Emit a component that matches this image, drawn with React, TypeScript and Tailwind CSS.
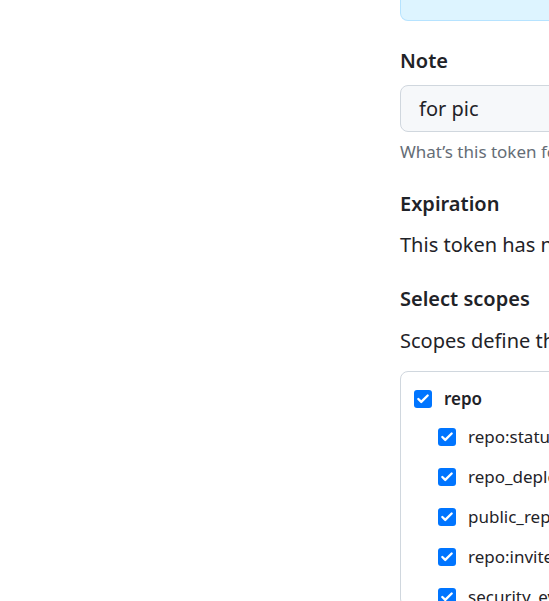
import { Check } from "lucide-react";

const children = ["repo:status", "repo_deployment", "public_repo", "repo:invite", "security_events"];

function Box() {
  return (
    <span className="w-[18px] h-[18px] shrink-0 rounded-[3px] bg-[#0075ff] flex items-center justify-center">
      <Check size={14} strokeWidth={4} className="text-white" />
    </span>
  );
}

export default function App() {
  return (
    <div className="w-[549px] h-[601px] overflow-hidden bg-white text-[#1f2328]" style={{ fontFamily: '"Noto Sans", "Open Sans", sans-serif' }}>
      <div className="pl-[400px] w-[1100px]">
        <div className="h-[21px] bg-[#ddf4ff] border border-t-0 border-[#b6e3ff] rounded-b-[8px]" />

        <div className="mt-[27px] text-[20px] font-semibold leading-[26px]">Note</div>
        <div className="mt-[11px] h-[47px] bg-[#f6f8fa] border border-[#d0d7de] rounded-[8px] flex items-center pl-[18px] text-[20px]">
          for pic
        </div>
        <div className="mt-[8px] text-[17px] leading-[24px] text-[#656d76]">What’s this token for? Note it here.</div>

        <div className="mt-[27px] text-[20px] font-semibold leading-[26px]">Expiration</div>
        <div className="mt-[15px] text-[20px] leading-[26px]">This token has no expiration date.</div>

        <div className="mt-[28px] text-[20px] font-semibold leading-[26px]">Select scopes</div>
        <div className="mt-[16px] text-[20px] leading-[26px]">Scopes define the access for personal tokens.</div>

        <div className="mt-[17px] border border-[#d0d7de] rounded-[8px] pt-[18px] pl-[13px]">
          <div className="flex items-center gap-[12px] h-[18px]">
            <Box />
            <span className="text-[17px] font-semibold">repo</span>
          </div>
          <div className="pl-[24px] mt-[20px] flex flex-col gap-[22px]">
            {children.map((c) => (
              <div key={c} className="flex items-center gap-[12px] h-[18px]">
                <Box />
                <span className="text-[17px]">{c}</span>
              </div>
            ))}
          </div>
        </div>
      </div>
    </div>
  );
}
